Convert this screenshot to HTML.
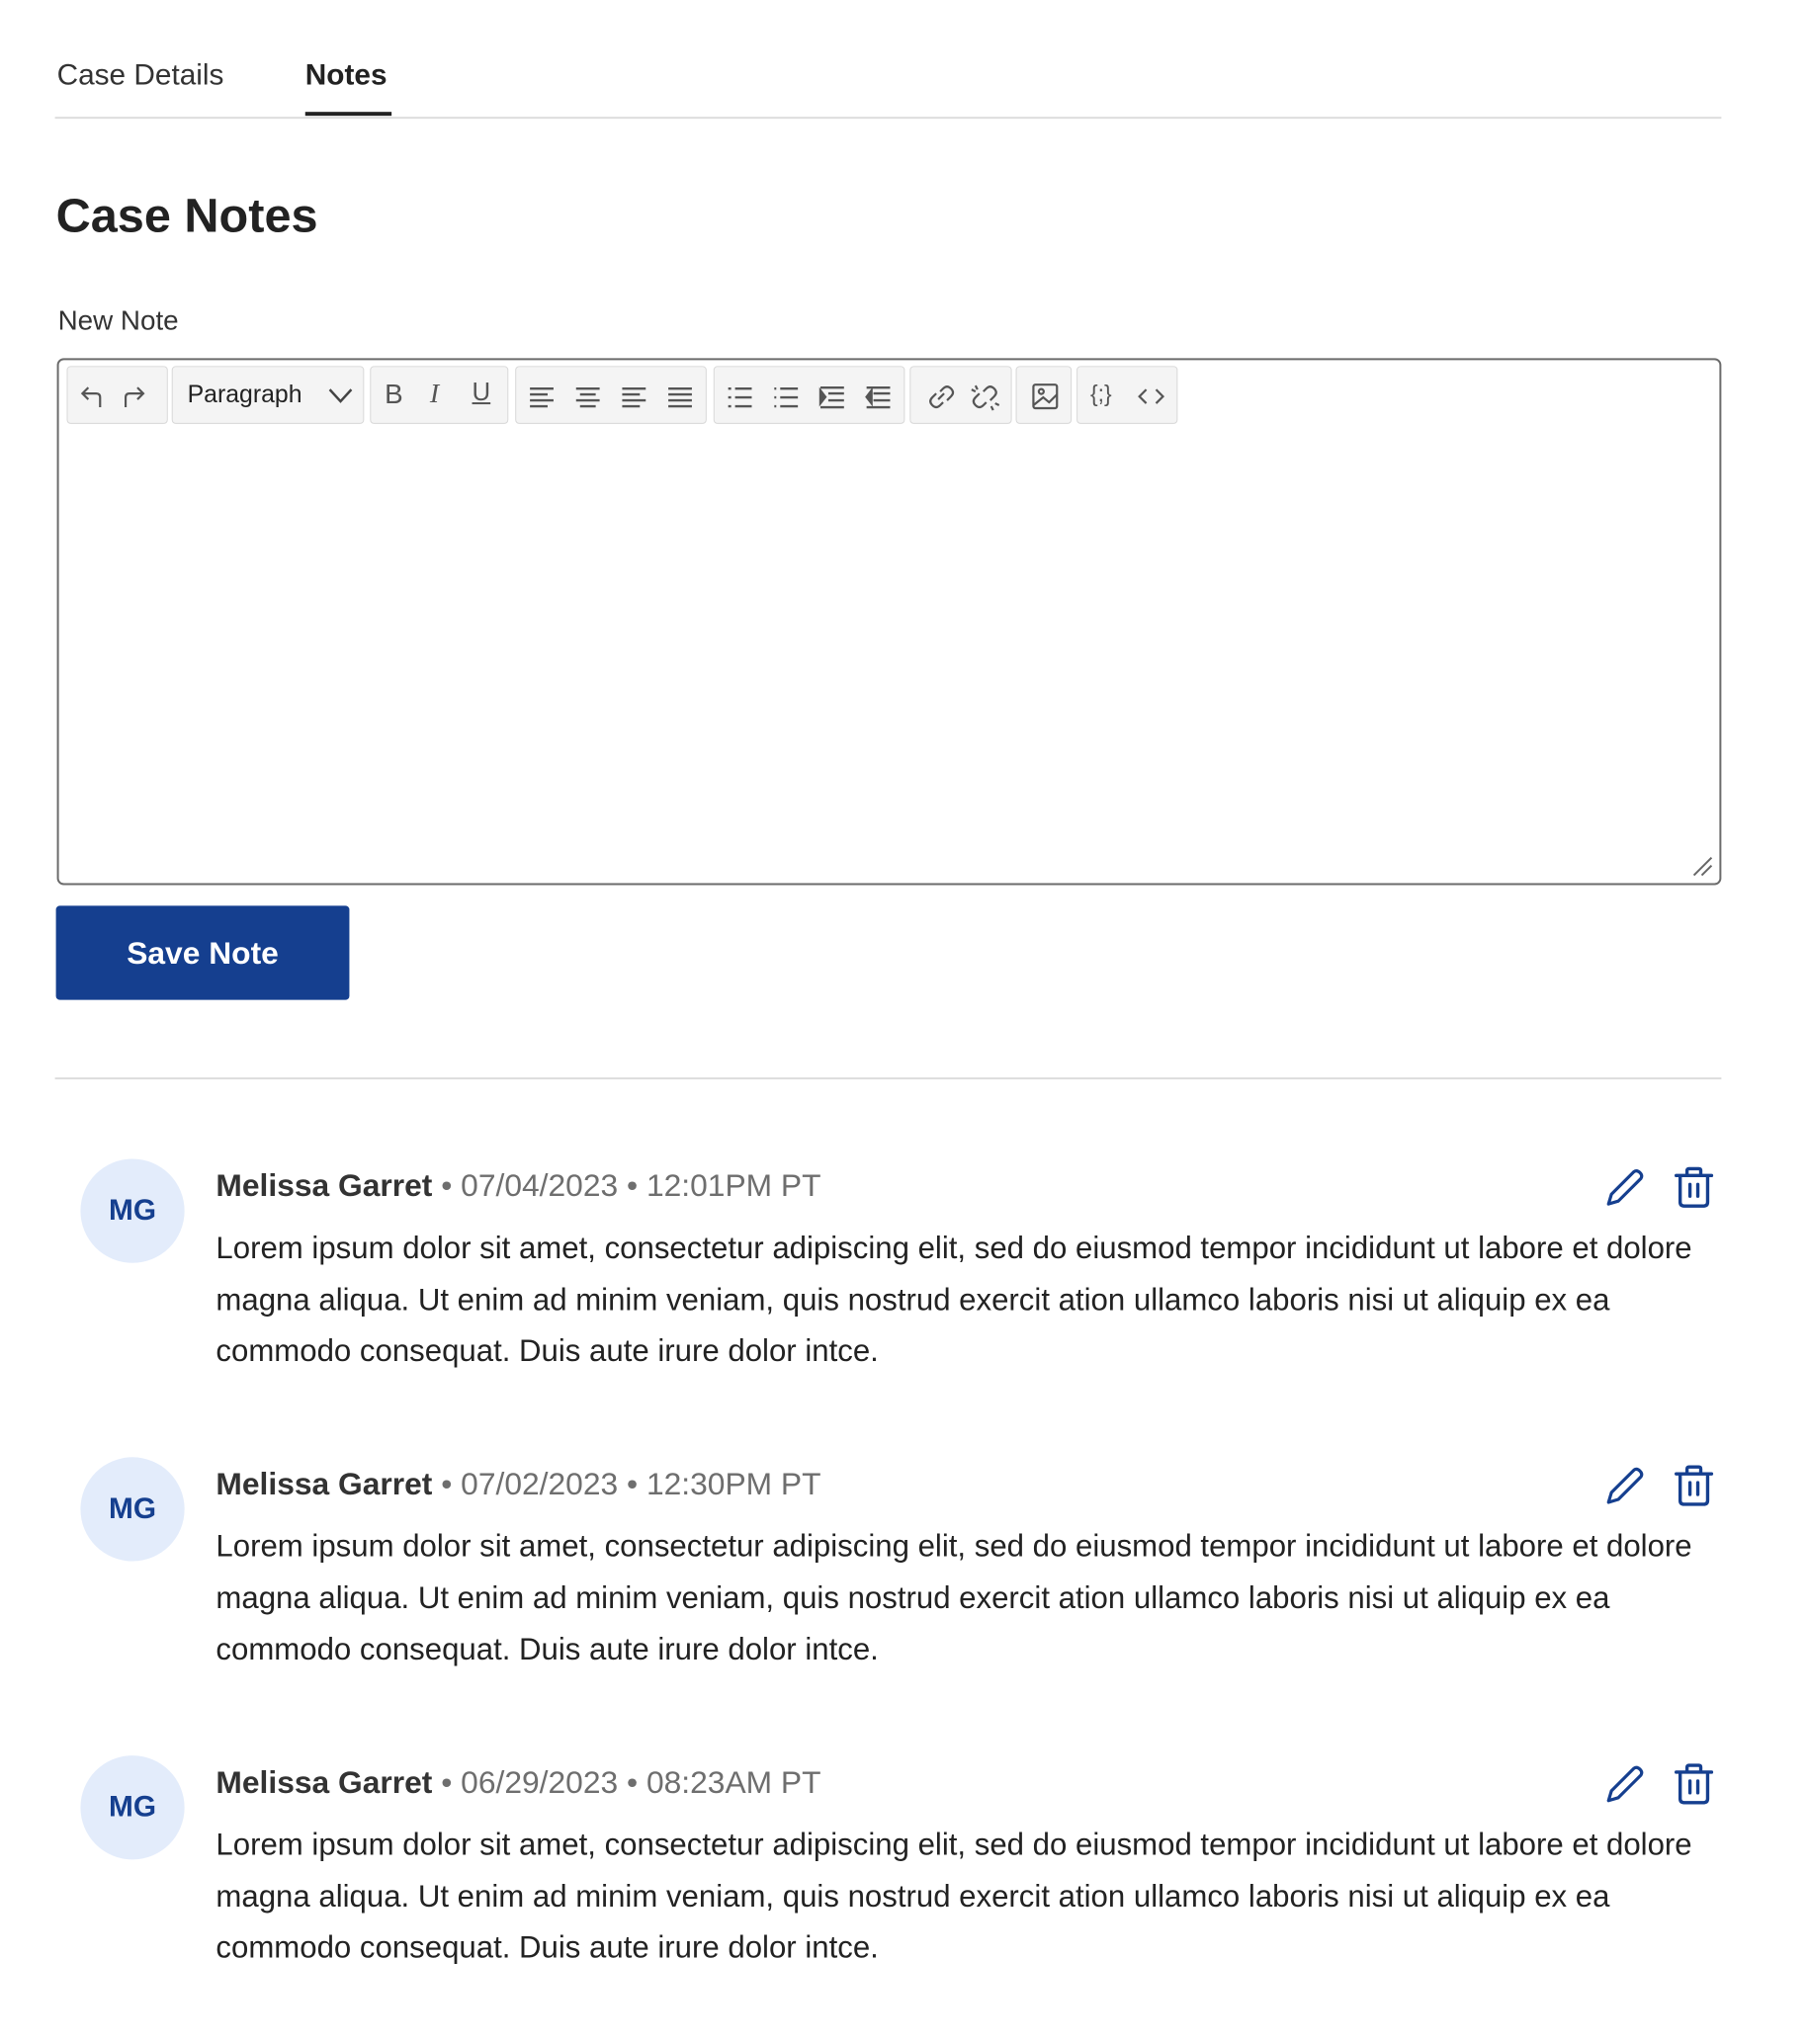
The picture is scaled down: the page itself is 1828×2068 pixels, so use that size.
<!DOCTYPE html>
<html><head><meta charset="utf-8"><style>
*{box-sizing:border-box;margin:0;padding:0}
body{width:1828px;height:2068px;background:#fff;font-family:"Liberation Sans",sans-serif;color:#222;position:relative;overflow:hidden}
#w{position:absolute;left:0;top:0;width:1840px;height:2080px;transform:scale(0.9928);transform-origin:0 0}
.a{position:absolute;white-space:nowrap}
.grp{position:absolute;top:373px;height:59px;background:#f4f4f4;border:1px solid #d8d8d8;border-radius:4px}
.ic{position:absolute;top:15px}
.ic svg{display:block}
.note .name{font-weight:bold;color:#333}
.date{color:#6e6e6e}
.body{font-size:31.4px;line-height:52.5px;color:#222}
</style></head><body><div id="w">
<div class="a" style="left:58px;top:60px;font-size:30px;color:#333">Case Details</div>
<div class="a" style="left:311px;top:60px;font-size:30px;font-weight:bold;color:#222">Notes</div>
<div class="a" style="left:56px;top:119px;width:1698px;height:2px;background:#ddd"></div>
<div class="a" style="left:311px;top:114px;width:88px;height:4px;background:#222"></div>
<div class="a" style="left:57px;top:192px;font-size:49px;font-weight:bold;color:#222">Case Notes</div>
<div class="a" style="left:59px;top:311px;font-size:28px;color:#333">New Note</div>
<div class="a" style="left:58px;top:365px;width:1696px;height:537px;border:2px solid #6b6b6b;border-radius:7px"></div>

<div class="grp" style="left:68px;width:103px">
 <svg class="ic" style="left:11px" width="80" height="30" viewBox="0 0 80 30" fill="none" stroke="#555" stroke-width="2.2"><path d="M10 6 L4 12 L10 18 M4 12 H18 Q22 12 22 16 V26"/><path d="M60 6 L66 12 L60 18 M66 12 H52 Q48 12 48 16 V26"/></svg>
</div>
<div class="grp" style="left:175px;width:196px">
 <div class="a" style="left:15px;top:14px;font-size:25px;color:#222">Paragraph</div>
 <svg class="ic" style="left:158px;top:20px" width="26" height="18" viewBox="0 0 26 18" fill="none" stroke="#444" stroke-width="2.5"><path d="M2 3 L13 15 L24 3"/></svg>
</div>
<div class="grp" style="left:377px;width:141px">
 <div class="a" style="left:14px;top:12px;font-size:28px;color:#555">B</div>
 <div class="a" style="left:60px;top:12px;font-size:28px;color:#555;font-family:'Liberation Serif',serif;font-style:italic">I</div>
 <div class="a" style="left:103px;top:10px;font-size:26px;color:#555;text-decoration:underline">U</div>
</div>
<div class="grp" style="left:525px;width:195px">
 <svg class="ic" style="left:12px" width="175" height="30" viewBox="0 0 175 30" stroke="#555" stroke-width="2.4"><path d="M2 7H26M2 13H20M2 19H26M2 25H20"/><path d="M49 7H73M53 13H69M49 19H73M53 25H69"/><path d="M96 7H120M96 13H114M96 19H120M96 25H114" /><path d="M143 7H167M143 13H167M143 19H167M143 25H167"/></svg>
</div>
<div class="grp" style="left:727px;width:195px">
 <svg class="ic" style="left:12px" width="175" height="30" viewBox="0 0 175 30" stroke="#555" stroke-width="2.4"><path d="M2 7H5M9 7H26M2 16H5M9 16H26M2 25H5M9 25H26"/><path d="M49 7H51M55 7H73M49 16H51M55 16H73M49 25H51M55 25H73" /><path d="M96 6H120M104 12H120M104 19H120M96 26H120"/><path d="M96 9L101 15.5L96 22Z" fill="#555"/><path d="M143 6H167M150 12H167M150 19H167M143 26H167"/><path d="M148 9L143 15.5L148 22Z" fill="#555"/></svg>
</div>
<div class="grp" style="left:927px;width:104px">
 <svg class="ic" style="left:14px" width="80" height="30" viewBox="0 0 80 30" fill="none" stroke="#555" stroke-width="2.2"><path d="M12 12 L8 16 Q4 20 8 24 Q12 28 16 24 L19 21 M14 18 L20 12 M16 10 L19 7 Q23 3 27 7 Q31 11 27 15 L23 19"/><path d="M56 12 L52 16 Q48 20 52 24 Q56 28 60 24 L63 21 M60 10 L63 7 Q67 3 71 7 Q75 11 71 15 L67 19 M52 4 L54 8 M48 8 L52 10 M72 22 L76 24 M68 25 L70 29"/></svg>
</div>
<div class="grp" style="left:1035px;width:57px">
 <svg class="ic" style="left:14px" width="30" height="30" viewBox="0 0 30 30" fill="none" stroke="#555" stroke-width="2.2"><rect x="3" y="3" width="24" height="24" rx="2"/><circle cx="11" cy="10" r="2.5"/><path d="M3 24 L13 16 L19 21 L27 13"/></svg>
</div>
<div class="grp" style="left:1097px;width:103px">
 <div class="a" style="left:13px;top:14px;font-size:23px;color:#555">{;}</div>
 <svg class="ic" style="left:60px" width="30" height="30" viewBox="0 0 30 30" fill="none" stroke="#555" stroke-width="2.2"><path d="M10 8 L3 15 L10 22 M20 8 L27 15 L20 22"/></svg>
</div>
<svg class="a" style="left:1722px;top:870px" width="24" height="24" viewBox="0 0 24 24" stroke="#666" stroke-width="2"><path d="M4 22 L22 4 M12 22 L22 12"/></svg>

<div class="a" style="left:57px;top:923px;width:299px;height:96px;background:#153f8f;border-radius:4px;color:#fff;font-size:32px;font-weight:bold;text-align:center;line-height:96px">Save Note</div>
<div class="a" style="left:56px;top:1098px;width:1698px;height:2px;background:#ddd"></div>

<div class="a note" style="left:0;top:1180px;width:1828px;height:260px">
 <div class="a" style="left:82px;top:1px;width:106px;height:106px;border-radius:50%;background:#e3ecfb;color:#153f8f;font-size:30px;font-weight:bold;text-align:center;line-height:106px">MG</div>
 <div class="a" style="left:220px;top:10px;font-size:32px"><span class="name">Melissa Garret</span> <span class="date">• 07/04/2023 • 12:01PM PT</span></div>
 <div class="a body" style="left:220px;top:66px">Lorem ipsum dolor sit amet, consectetur adipiscing elit, sed do eiusmod tempor incididunt ut labore et dolore<br>magna aliqua. Ut enim ad minim veniam, quis nostrud exercit ation ullamco laboris nisi ut aliquip ex ea<br>commodo consequat. Duis aute irure dolor intce.</div>
 <svg class="a" style="left:1635px;top:9px" width="42" height="42" viewBox="0 0 42 42" fill="none" stroke="#153f8f" stroke-width="3.2" stroke-linejoin="round"><path d="M30 5 Q33 3 36 6 Q39 9 37 12 L14 35 L4 38 L7 28 Z"/></svg>
 <svg class="a" style="left:1705px;top:8px" width="42" height="44" viewBox="0 0 42 44" fill="none" stroke="#153f8f" stroke-width="3.4" stroke-linecap="round" stroke-linejoin="round"><path d="M3 10H39M14 10V5Q14 3 16 3H26Q28 3 28 5V10M7 10V37Q7 41 11 41H31Q35 41 35 37V10M17 19V31M25 19V31"/></svg>
</div>
<div class="a note" style="left:0;top:1484px;width:1828px;height:260px">
 <div class="a" style="left:82px;top:1px;width:106px;height:106px;border-radius:50%;background:#e3ecfb;color:#153f8f;font-size:30px;font-weight:bold;text-align:center;line-height:106px">MG</div>
 <div class="a" style="left:220px;top:10px;font-size:32px"><span class="name">Melissa Garret</span> <span class="date">• 07/02/2023 • 12:30PM PT</span></div>
 <div class="a body" style="left:220px;top:66px">Lorem ipsum dolor sit amet, consectetur adipiscing elit, sed do eiusmod tempor incididunt ut labore et dolore<br>magna aliqua. Ut enim ad minim veniam, quis nostrud exercit ation ullamco laboris nisi ut aliquip ex ea<br>commodo consequat. Duis aute irure dolor intce.</div>
 <svg class="a" style="left:1635px;top:9px" width="42" height="42" viewBox="0 0 42 42" fill="none" stroke="#153f8f" stroke-width="3.2" stroke-linejoin="round"><path d="M30 5 Q33 3 36 6 Q39 9 37 12 L14 35 L4 38 L7 28 Z"/></svg>
 <svg class="a" style="left:1705px;top:8px" width="42" height="44" viewBox="0 0 42 44" fill="none" stroke="#153f8f" stroke-width="3.4" stroke-linecap="round" stroke-linejoin="round"><path d="M3 10H39M14 10V5Q14 3 16 3H26Q28 3 28 5V10M7 10V37Q7 41 11 41H31Q35 41 35 37V10M17 19V31M25 19V31"/></svg>
</div>
<div class="a note" style="left:0;top:1788px;width:1828px;height:260px">
 <div class="a" style="left:82px;top:1px;width:106px;height:106px;border-radius:50%;background:#e3ecfb;color:#153f8f;font-size:30px;font-weight:bold;text-align:center;line-height:106px">MG</div>
 <div class="a" style="left:220px;top:10px;font-size:32px"><span class="name">Melissa Garret</span> <span class="date">• 06/29/2023 • 08:23AM PT</span></div>
 <div class="a body" style="left:220px;top:66px">Lorem ipsum dolor sit amet, consectetur adipiscing elit, sed do eiusmod tempor incididunt ut labore et dolore<br>magna aliqua. Ut enim ad minim veniam, quis nostrud exercit ation ullamco laboris nisi ut aliquip ex ea<br>commodo consequat. Duis aute irure dolor intce.</div>
 <svg class="a" style="left:1635px;top:9px" width="42" height="42" viewBox="0 0 42 42" fill="none" stroke="#153f8f" stroke-width="3.2" stroke-linejoin="round"><path d="M30 5 Q33 3 36 6 Q39 9 37 12 L14 35 L4 38 L7 28 Z"/></svg>
 <svg class="a" style="left:1705px;top:8px" width="42" height="44" viewBox="0 0 42 44" fill="none" stroke="#153f8f" stroke-width="3.4" stroke-linecap="round" stroke-linejoin="round"><path d="M3 10H39M14 10V5Q14 3 16 3H26Q28 3 28 5V10M7 10V37Q7 41 11 41H31Q35 41 35 37V10M17 19V31M25 19V31"/></svg>
</div>
</div></body></html>
